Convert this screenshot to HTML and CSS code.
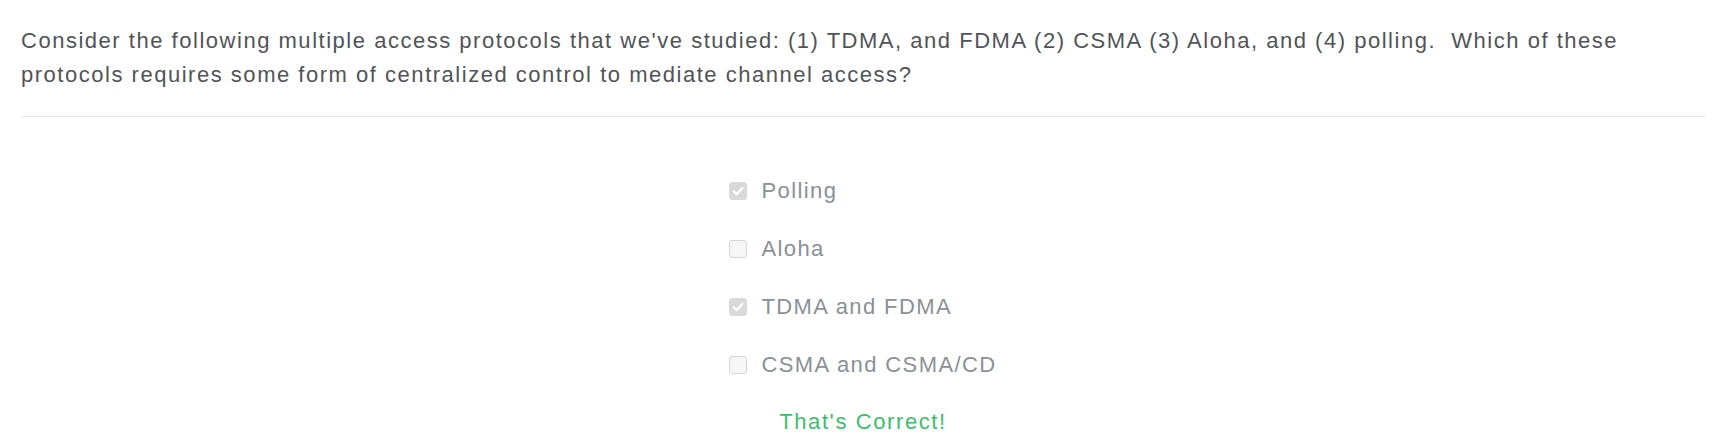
FILE: index.html
```html
<!DOCTYPE html>
<html>
<head>
<meta charset="utf-8">
<link rel="stylesheet" href="styles.css">
</head>
<body>
<div class="card">
  <p class="question">Consider the following multiple access protocols that we've studied: (1) TDMA, and FDMA (2) CSMA (3) Aloha, and (4) polling.&nbsp; Which of these protocols requires some form of centralized control to mediate channel access?</p>
  <hr class="divider">
  <div class="answers">
    <div class="options">
      <label class="option">
        <span class="box checked"><svg viewBox="0 0 16 16"><path d="M3.8 8.4l2.9 2.9L12.4 5" fill="none" stroke="#fff" stroke-width="2.2" stroke-linecap="round" stroke-linejoin="round"/></svg></span>
        <span class="label">Polling</span>
      </label>
      <label class="option">
        <span class="box"></span>
        <span class="label">Aloha</span>
      </label>
      <label class="option">
        <span class="box checked"><svg viewBox="0 0 16 16"><path d="M3.8 8.4l2.9 2.9L12.4 5" fill="none" stroke="#fff" stroke-width="2.2" stroke-linecap="round" stroke-linejoin="round"/></svg></span>
        <span class="label">TDMA and FDMA</span>
      </label>
      <label class="option">
        <span class="box"></span>
        <span class="label">CSMA and CSMA/CD</span>
      </label>
    </div>
    <div class="feedback">That's Correct!</div>
  </div>
</div>
</body>
</html>
```
FILE: styles.css
```css
html, body {
  margin: 0;
  padding: 0;
  background: #ffffff;
}
.card {
  padding: 24px 10px 0 21px;
  font-family: "Liberation Sans", Arial, sans-serif;
}
.question {
  margin: 0;
  font-size: 22px;
  line-height: 34px;
  letter-spacing: 1.52px;
  color: #505458;
  padding-right: 20px;
}
.divider {
  border: 0;
  border-top: 1px solid #e3e3e3;
  margin: 24px 0 0 0;
}
.answers {
  display: flex;
  flex-direction: column;
  align-items: center;
  padding-top: 62px;
}
.options {
  display: flex;
  flex-direction: column;
  gap: 34px;
}
.option {
  display: flex;
  align-items: center;
  gap: 14px;
  height: 24px;
  line-height: 24px;
}
.box {
  box-sizing: border-box;
  width: 18px;
  height: 18px;
  border: 1px solid #d6d6d6;
  border-radius: 3px;
  background: #f6f6f6;
  display: flex;
  align-items: center;
  justify-content: center;
}
.box.checked {
  background: #d9d9d9;
  border-color: #d9d9d9;
}
.box svg {
  width: 16px;
  height: 16px;
}
.label {
  font-size: 22px;
  letter-spacing: 1.4px;
  color: #8a9096;
}
.feedback {
  margin-top: 33px;
  font-size: 22px;
  line-height: 24px;
  letter-spacing: 1.6px;
  color: #3dbd6b;
}
```
